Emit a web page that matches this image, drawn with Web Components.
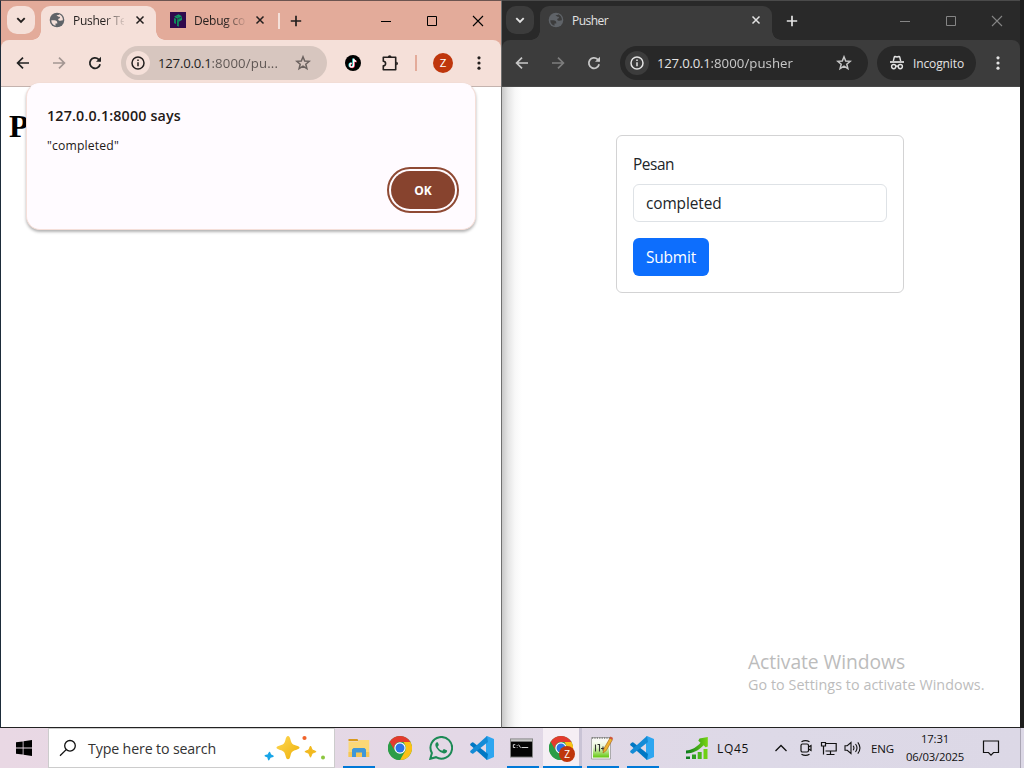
<!DOCTYPE html>
<html lang="en">
<head>
<meta charset="utf-8">
<title>Desktop</title>
<style>
html,body{margin:0;width:1024px;height:768px;overflow:hidden;background:#1d1d1d}
body{font-family:"Open Sans","Noto Sans",sans-serif}
</style>
</head>
<body>
<desk-top></desk-top>
<script>
const ICONS = {
  down:['0 0 16 16','<path d="M4.3 6.200l3.700 3.700 3.700-3.700" fill="none" stroke="currentColor" stroke-width="1.900"/>'],
  x:['0 0 16 16','<path d="M4.500 4.500l7 7M11.500 4.500l-7 7" stroke="currentColor" stroke-width="1.500"/>'],
  plus:['0 0 16 16','<path d="M8 2.800v10.400M2.800 8h10.400" stroke="currentColor" stroke-width="1.700"/>'],
  min:['0 0 12 12','<path d="M1 6.500h10" stroke="currentColor"/>'],
  max:['0 0 12 12','<path d="M1.500 1.500h9v9h-9z" fill="none" stroke="currentColor"/>'],
  close:['0 0 12 12','<path d="M1 1l10 10M11 1L1 11" stroke="currentColor" stroke-width="1.100"/>'],
  back:['0 0 16 16','<path d="M14 8H3M8 2.600L2.600 8 8 13.400" fill="none" stroke="currentColor" stroke-width="1.700"/>'],
  fwd:['0 0 16 16','<path d="M2 8h11M8 2.600L13.400 8 8 13.400" fill="none" stroke="currentColor" stroke-width="1.700"/>'],
  reload:['0 0 16 16','<path d="M13.100 9.200A5.200 5.200 0 1 1 11.600 4.300L13 5.800" fill="none" stroke="currentColor" stroke-width="1.800"/><path d="M14 1.800v5H9z" fill="currentColor"/>'],
  info:['0 0 16 16','<circle cx="8" cy="8" r="6" fill="none" stroke="currentColor" stroke-width="1.500"/><path d="M8 7.200v4M8 4.500v1.600" stroke="currentColor" stroke-width="1.500"/>'],
  star:['0 0 16 16','<path d="M8 1.800l1.700 4.200 4.600.3-3.500 2.900 1.100 4.400L8 11.200l-3.900 2.400 1.100-4.400-3.500-2.900 4.600-.3z" fill="none" stroke="currentColor" stroke-width="1.500"/>'],
  dots:['0 0 16 16','<g fill="currentColor"><circle cx="8" cy="2.800" r="1.600"/><circle cx="8" cy="8" r="1.600"/><circle cx="8" cy="13.200" r="1.600"/></g>'],
  globe:['0 0 16 16','<circle cx="8" cy="8" r="7.300" fill="#5f6368"/><path d="M2.300 8.300h3c2 0 3 1 3 2.600v.6H6.500v2.200C4 13.100 2.200 11 2.300 8.300zM7.300 3c.9 0 .8 1.100 1.800 1.500.9.4 1.900 0 1.900 1 0 1.200-1.800.8-1.800 2 0 1.600 3 1.300 4.700.8.200-2.900-1.400-5.200-3.600-6.100-.3.900-1.600.8-3 .8z" fill="var(--globe,#f5e0d9)"/>'],
  pterm:['0 0 16 16','<path fill="#300a4d" d="M0 0h16v16H0z"/><path d="M4 4.700l4.500-2.400L12 4.300 7.600 6.700zM4 6v5l2 1V7.100zm3 1.700v6.100l1.800.9V9.700L12 8V5zM8 5l3-1.500" fill="#129767"/><path d="M6 4l4 2M7.500 8l4-2M5 6v5M8 8v5" stroke="#087249" stroke-width=".7"/>'],
  tiktok:['0 0 16 16','<circle cx="8" cy="8" r="8" fill="#000"/><g fill="none" stroke-width="1.500"><path d="M8 3.500v6.400a1.900 1.900 0 1 1-1.900-1.900M8 3.500c.2 1.700 1.200 2.500 2.600 2.600" stroke="#25e8e2"/><path d="M9.100 4.100v6.400a1.900 1.900 0 1 1-1.900-1.900M9.100 4.100c.2 1.700 1.200 2.500 2.600 2.600" stroke="#f42c58"/><path d="M8.600 3.700v6.400a1.900 1.900 0 1 1-1.900-1.900M8.600 3.700c.2 1.700 1.200 2.500 2.600 2.600" stroke="#fff" stroke-width="1.400"/></g>'],
  puzzle:['0 0 18 18','<path d="M2.300 3.300h12.400v12.400H2.300v-3.900a2.200 2.200 0 0 0 0-4.600z" fill="none" stroke="currentColor" stroke-width="1.600" stroke-linejoin="round"/><path d="M6.900 3a1.800 1.800 0 0 1 3.600 0zM15.200 7.700a1.800 1.800 0 0 1 0 3.600z" fill="currentColor"/>'],
  incog:['0 0 16 16','<path d="M4.300 6l1-4q.2-.6.800-.5L8 2l1.900-.5q.6-.1.800.5l1 4" fill="none" stroke="currentColor" stroke-width="1.400"/><path d="M1 7h14" stroke="currentColor" stroke-width="1.700"/><g fill="none" stroke="currentColor" stroke-width="1.400"><circle cx="4.700" cy="11.600" r="2.100"/><circle cx="11.300" cy="11.600" r="2.100"/><path d="M6.800 11.300q1.200-.8 2.400 0"/></g>'],
  win:['0 0 16 16','<path d="M0 2.300l6.700-.9v6.200H0zM7.500 1.300L16 0v7.600H7.500zM0 8.400h6.700v6.200L0 13.700zM7.500 8.400H16V16l-8.500-1.300z" fill="#000"/>'],
  search:['0 0 18 18','<circle cx="11" cy="6.800" r="5.300" fill="none" stroke="#111" stroke-width="1.300"/><path d="M7.200 10.600L1 16.800" stroke="#111" stroke-width="1.300"/>'],
  sparkle:['0 0 62 26','<defs><linearGradient id="g" x1="0" y1="0" x2="1" y2="1"><stop stop-color="#ffd957"/><stop offset="1" stop-color="#edb008"/></linearGradient></defs><path d="M24 1c1.300 0 1.800 1 2.600 4 1 3.600 1.800 4.400 5.400 5.400 2.500.7 3.500 1 3.500 2.200s-1 1.600-3.500 2.300c-3.600 1-4.400 1.700-5.400 5.300-.8 3-1.300 4-2.600 4s-1.800-1-2.600-4c-1-3.600-1.800-4.300-5.400-5.300-2.500-.7-3.500-1.100-3.500-2.300s1-1.500 3.500-2.200c3.600-1 4.400-1.800 5.400-5.400.8-3 1.300-4 2.600-4z" fill="url(#g)"/><path d="M46.500 11l1.700 3.900 3.900 1.700-3.900 1.700-1.700 3.900-1.700-3.900-3.900-1.700 3.900-1.700z" fill="#f2b91e" stroke="#f2b91e" stroke-linejoin="round"/><path d="M5.500 17.500l1 2.500 2.500 1.200-2.800.8-1.500 2.600-.8-2.800-2.600-1 2.800-.8z" fill="#17a5e8" stroke="#17a5e8" stroke-width="1.500" stroke-linejoin="round"/><circle cx="40.500" cy="3" r="2.100" fill="#f0632b"/><circle cx="59" cy="22.500" r="2" fill="#8cc63f"/>'],
  folder:['0 0 24 24','<path d="M1.500 3h9l1 2h-10z" fill="#d99a1c"/><path d="M1.500 5.500h9.500L12.500 4h9.700v17H1.500z" fill="#fbd877"/><path d="M1.500 16h20.700v5H1.500z" fill="#f5c657"/><path d="M5 13.500l1.500-1.500h11l1.500 1.500V21h-4v-4.500H9V21H5z" fill="#3f97d8"/>'],
  chrome:['0 0 24 24','<circle cx="12" cy="12" r="12" fill="#2b9d47"/><path d="M1.600 6A12 12 0 0 1 22.400 6H12a6 6 0 0 0-5.200 9z" fill="#e33b2e"/><path d="M22.400 6A12 12 0 0 1 12 24l5.200-9A6 6 0 0 0 17 8.700L15.500 6z" fill="#fbc116"/><path d="M1.600 6l5.200 9A6 6 0 0 0 14 17.600L12 24A12 12 0 0 1 1.600 6z" fill="#2b9d47"/><circle cx="12" cy="12" r="5.700" fill="#fff"/><circle cx="12" cy="12" r="4.500" fill="#2c73e8"/>'],
  whatsapp:['0 0 24 24','<path d="M1.300 22.800l1.600-5.700A10.800 10.800 0 1 1 7 21.200z" fill="none" stroke="#1c8a55" stroke-width="2"/><path d="M8.300 6.200c-.5-.1-1.100.2-1.500.9-.9 1.400-.5 3.300 1.100 5.500 2 2.800 4.600 4.600 7 4.800 1.700.1 3-.9 3.200-2.200.1-.5 0-.7-.4-.9l-2.300-1.100c-.5-.2-.7-.1-1 .3l-.8 1c-.3.300-.6.300-1 .1-1.700-.8-2.900-1.900-3.800-3.400-.2-.4-.1-.6.100-.9l.7-.9c.2-.3.200-.5.100-.8L8.900 6.500q-.2-.3-.6-.3z" fill="#1c8a55"/>'],
  vscode:['0 0 24 24','<path d="M17 0l7 3v18l-7 3-1-1V1z" fill="#2ea6f0"/><path d="M17 24L.5 9.200q-.7-.7 0-1.400L2 6.500q.7-.5 1.400 0L18 18z" fill="#0078c4"/><path d="M17 0L.5 14.800q-.7.700 0 1.400L2 17.500q.7.500 1.400 0L18 6z" fill="#148bd6"/>'],
  cmd:['0 0 24 20','<path d="M0 0h24v20H0z" fill="#888"/><path d="M1 1h22v2H1z" fill="#c9c9c9"/><path d="M1 3.500h22V19H1z" fill="#050505"/><path d="M5.500 6.500H3.500v3h2M7.500 7v.8M7.500 9v.7M9 6.500l2 3.200M12 9.500h7" fill="none" stroke="#ddd"/>'],
  npp:['0 0 24 24','<defs><linearGradient id="n" x1="0" y1="0" x2="0" y2="1"><stop stop-color="#fafcf5"/><stop offset=".4" stop-color="#e4f3cd"/><stop offset="1" stop-color="#62c80e"/></linearGradient></defs><path d="M1.500 1.500h19v21.500h-19z" fill="#f8f8f4" stroke="#999" stroke-width=".8"/><path d="M3 5h16v16.500H3z" fill="url(#n)"/><path d="M2 2h18" stroke="#777" stroke-width="1.600" stroke-dasharray="1.200 1.200"/><path d="M5.500 8.500v7M7.500 8.500h2v7M11 12.500h3.500M13 10.500v4" stroke="#333" fill="none" stroke-width="1.100"/><path d="M13 17l1-4.500L20 2l2.500 1.600L16.300 14.500z" fill="#efb52e" stroke="#a55b16" stroke-width=".6"/><path d="M19.500 2.200L20.500.500l2.600 1.500-1 1.800z" fill="#d05538"/>'],
  chart:['0 0 24 24','<defs><linearGradient id="c" x1="0" x2="1"><stop stop-color="#087a1c"/><stop offset="1" stop-color="#78d513"/></linearGradient></defs><path fill="url(#c)" d="M1 17.500V14.500c6-.5 10.500-3.200 14.500-7.800L13.300 4.800 14.500 2.500 22.800 1v9.500l-2.300.8-1.800-2C13.500 14.500 8 17.500 1 17.500z"/><path d="M1 20.500h4V23H1z" fill="#128023"/><path d="M7 18.500h4V23H7z" fill="#2c9e20"/><path d="M12.700 16h4v7h-4z" fill="#4cb91b"/><path d="M18.500 13h4v10h-4z" fill="#70d014"/>'],
  up:['0 0 14 14','<path d="M1.500 10L7 4.500 12.500 10" fill="none" stroke="#111" stroke-width="1.300"/>'],
  meet:['0 0 14 18','<g fill="none" stroke="#111" stroke-width="1.200"><rect x="2" y="5" width="7.500" height="8" rx="1.500"/><path d="M9.500 8l2.500-1.500v5L9.500 10M2.500 2.800q4-2.500 8 0M2.500 15.200q4 2.500 8 0"/></g>'],
  net:['0 0 18 16','<path d="M5.500 3.500h10.700v7.500H5.500M10.500 11v3M6.500 14.500h8M1.500 2.500h4v3.500h-4zM3.500 6v8.500" fill="none" stroke="#111" stroke-width="1.200"/>'],
  vol:['0 0 18 16','<g fill="none" stroke="#111" stroke-width="1.100"><path d="M1 5.700h2.200L7 2.500v11L3.200 10.300H1z"/><path d="M9.200 5.800q1.500 2.200 0 4.400M11.500 4q3 4 0 8M13.800 2.300q4.300 5.700 0 11.400"/></g>'],
  note:['0 0 18 18','<path d="M1.500 2h15v11.500H11.500L9 16.200 6.500 13.500h-5z" fill="none" stroke="#111" stroke-width="1.200"/>']
};
const define = (name, html, ready) => customElements.define(name, class extends HTMLElement {
  connectedCallback(){
    if(this.shadowRoot) return;
    const t = document.createElement('template');
    t.innerHTML = typeof html === 'function' ? html(this) : html;
    this.attachShadow({mode:'open'}).append(t.content.cloneNode(true));
    if(ready) ready(this);
  }
});

define('ui-icon', el => {
  const [box, art] = ICONS[el.getAttribute('name')];
  const w = el.getAttribute('w') || 16, h = el.getAttribute('h') || w;
  return `<style>:host{display:block;flex:none;width:${w}px;height:${h}px}svg{display:block}</style><svg width="${w}" height="${h}" viewBox="${box}">${art}</svg>`;
});

/* One line of text whose tracking is adjusted to reach the width in its "w" attribute. */
define('fit-text', `<style>:host{display:block;flex:none;white-space:pre}span{display:inline-block}</style><span><slot></slot></span>`, el => {
  const w = +el.getAttribute('w');
  queueMicrotask(() => {
    const s = el.shadowRoot.querySelector('span');
    const now = s.getBoundingClientRect().width;
    if(w && now) s.style.letterSpacing = (w - now) / el.textContent.length + 'px';
  });
});

define('browser-window', `<style>
:host{display:flex;flex-direction:column;position:relative;box-sizing:border-box;height:728px;background:#fff;border-left:1px solid var(--edge);border-top:1px solid var(--top);border-bottom:1px solid #222;color:var(--ink)}
.frame{background:var(--frame);flex:none}
.strip{display:flex;align-items:center;height:39px;padding-left:var(--lead)}
.menu{width:28px;height:28px;border-radius:10px;background:var(--menu);display:grid;place-items:center;margin:-1px 6px 0 0}
.ctl{display:flex;gap:34px;margin-left:auto;margin-right:var(--ctlright);color:var(--ctl)}
.bar{display:flex;align-items:center;height:46px;background:var(--bar);border-radius:8px 8px 0 0}
.line{height:1px;background:var(--line)}
main{flex:1;position:relative;min-height:0}
</style>
<div class="frame"><div class="strip"><div class="menu"><ui-icon name="down"></ui-icon></div><slot name="tabs"></slot>
<div class="ctl"><ui-icon name="min" w="12"></ui-icon><ui-icon name="max" w="12"></ui-icon><ui-icon name="close" w="12"></ui-icon></div></div>
<div class="bar"><slot name="bar"></slot></div></div><div class="line"></div>
<main><slot></slot></main>`);

define('browser-tab', el => `<style>
:host{display:flex;align-items:center;box-sizing:border-box;position:relative;height:34px;margin-top:5px;padding:0 8px 6px 8px;font-size:12px}
:host([active]){background:var(--bar);border-radius:9px 9px 0 0}
:host([active])::before,:host([active])::after{content:"";position:absolute;bottom:0;width:9px;height:9px}
:host([active])::before{left:-9px;background:radial-gradient(circle at 0 0,transparent 8.5px,var(--bar) 9px)}
:host([active])::after{right:-9px;background:radial-gradient(circle at 100% 0,transparent 8.5px,var(--bar) 9px)}
.t{margin-left:8px;overflow:hidden;flex:none;width:var(--tw,150px)}
ui-icon:last-child{margin-left:auto}
:host([fade]) .t{-webkit-mask:linear-gradient(90deg,#000 60%,transparent 105%);mask:linear-gradient(90deg,#000 60%,transparent 105%)}
</style><ui-icon name="${el.getAttribute('icon')}"></ui-icon><div class="t"><slot></slot></div><ui-icon name="x"></ui-icon>`);

define('omni-box', `<style>
:host{display:flex;align-items:center;box-sizing:border-box;height:34px;border-radius:17px;background:var(--omni);padding:0 16px 0 5px;font-size:13.2px;margin-left:18px}
.i{width:24px;height:24px;border-radius:50%;background:var(--chip);display:grid;place-items:center;margin-right:8px}
.s{margin-left:auto;color:var(--star)}
</style><div class="i"><ui-icon name="info"></ui-icon></div><slot></slot><ui-icon class="s" name="star"></ui-icon>`);

define('nav-buttons', `<style>:host{display:flex;gap:20px;padding-left:14px;color:var(--nav)}.f{color:var(--off)}</style>
<ui-icon name="back"></ui-icon><ui-icon class="f" name="fwd"></ui-icon><ui-icon name="reload"></ui-icon>`);

define('alert-dialog', `<style>
:host{display:block;position:absolute;left:26px;top:83px;width:450px;height:147px;box-sizing:border-box;background:#fffbff;border:1px solid #f5dfd9;border-top-color:#fffbff;border-radius:14px;box-shadow:0 2px 3px rgba(0,0,0,.3);padding:22px 20px 0;color:#231917}
.h{font-size:14.300px;line-height:20px;font-weight:600}
.m{font-size:12.200px;line-height:18px;margin-top:11px}
button{display:block;margin:16px 0 0 auto;width:64px;height:38px;border:0;border-radius:19px;background:#87432e;outline:2px solid #8f4a34;outline-offset:2px;color:#fff;font:700 12px "Open Sans",sans-serif;padding:0}
</style><fit-text class="h" w="134">127.0.0.1:8000 says</fit-text><fit-text class="m" w="72">"completed"</fit-text><button>OK</button>`);

define('message-card', `<style>
:host{display:block;box-sizing:border-box;width:288px;height:158px;border:1px solid #d3d3d4;border-radius:6px;padding:17px 16px 16px;background:#fff;color:#212529;font-size:15.400px;line-height:24px}
.in{box-sizing:border-box;height:38px;border:1px solid #dee2e6;border-radius:6px;padding:7px 12px;margin-top:7px}
.b{box-sizing:border-box;width:76px;height:38px;border-radius:6px;background:#0d6efd;color:#fff;padding:8px 13px;margin-top:16px}
</style><fit-text w="41">Pesan</fit-text><div class="in"><fit-text w="75.500">completed</fit-text></div><div class="b"><fit-text w="50">Submit</fit-text></div>`);

define('task-item', el => `<style>
:host{display:flex;flex:none;align-items:center;justify-content:center;width:32px;height:40px;box-sizing:border-box;position:relative}
:host([open]){box-shadow:inset 0 -2px #0078d7}
:host([active]){width:39px;padding-right:3px;background:linear-gradient(90deg,#f5eef4 36px,#c9c3d5 36px)}
b{position:absolute;left:16px;top:18px;width:16px;height:16px;border-radius:50%;background:#bf360c;color:#fff;font:10px/16px "Open Sans",sans-serif;text-align:center}
</style><ui-icon name="${el.getAttribute('icon')}" w="${el.getAttribute('w')||24}" h="${el.getAttribute('h')||24}"></ui-icon>${el.hasAttribute('badge')?`<b>${el.getAttribute('badge')}</b>`:''}`);

define('task-bar', `<style>
:host{display:flex;align-items:center;height:40px;background:linear-gradient(90deg,#e9d8e4,#e3d8e6 45%,#ddd9e7 75%,#dcd8e6);color:#111;font-size:12px}
.start{width:48px;display:grid;place-items:center;flex:none}
.search{box-sizing:border-box;width:287px;height:40px;background:#fff;border:1px solid #ccc;display:flex;align-items:center;padding:0 8px 0 10px;font-size:14.200px;color:#333;flex:none}
.search fit-text{margin-left:11px}.search .sp{margin-left:auto}
.apps{display:flex;margin-left:8px}
.clock{margin-left:12px;margin-right:1px;width:58px;line-height:18px;display:flex;flex-direction:column;align-items:center}
.end{width:3px;height:40px;margin-left:auto;border-left:1px solid #aaa6b4}
</style>
<div class="start"><ui-icon name="win"></ui-icon></div>
<div class="search"><ui-icon name="search" w="18"></ui-icon><fit-text w="128">Type here to search</fit-text><ui-icon class="sp" name="sparkle" w="62" h="26"></ui-icon></div>
<div class="apps">
<task-item open icon="folder"></task-item>
<task-item icon="chrome" style="margin-left:9px"></task-item>
<task-item icon="whatsapp" style="margin-left:9px"></task-item>
<task-item icon="vscode" style="margin-left:9px"></task-item>
<task-item open icon="cmd" w="23" h="20" style="margin-left:9px;padding-right:4px"></task-item>
<task-item open active icon="chrome" badge="Z" style="margin-left:4px"></task-item>
<task-item open icon="npp" style="margin-left:5px;padding-right:2px"></task-item>
<task-item open icon="vscode" style="margin-left:8px;padding-right:2px"></task-item>
</div>
<ui-icon name="chart" w="24" style="margin-left:26px"></ui-icon>
<fit-text w="32" style="margin-left:8px">LQ45</fit-text>
<ui-icon name="up" w="14" style="margin-left:25px"></ui-icon>
<ui-icon name="meet" w="14" h="18" style="margin-left:11px"></ui-icon>
<ui-icon name="net" w="18" h="16" style="margin-left:7px"></ui-icon>
<ui-icon name="vol" w="18" h="16" style="margin-left:6px"></ui-icon>
<fit-text w="23" style="margin-left:9px;font-size:11.500px">ENG</fit-text>
<div class="clock"><fit-text w="28" style="font-size:11.300px">17:31</fit-text><fit-text w="58" style="font-size:11.300px">06/03/2025</fit-text></div>
<ui-icon name="note" w="18" style="margin-left:17px"></ui-icon>
<div class="end"></div>`);

define('desk-top', `<style>
:host{display:flex;flex-direction:column;position:relative;width:1024px;height:768px}
.wins{display:flex;height:728px}
.l{width:501px;--edge:#1d2c3a;--top:#6c5450;--frame:#e3ab9a;--bar:#f5e0d9;--menu:#f5e0d9;--ink:#231f1e;--ctl:#000;--lead:6px;--ctlright:17px;--omni:#d7c6bf;--chip:#f5e0d9;--star:#6b625f;--nav:#222;--off:#a39692;--line:#c4b3ae;--tw:51px}
.r{width:519px;--edge:#707070;--top:#4a4a4a;--frame:#292929;--bar:#3c3c3c;--menu:#3c3c3c;--ink:#e3e3e3;--ctl:#858585;--lead:4px;--ctlright:17px;--omni:#282828;--chip:#3c3c3c;--star:#c7c7c7;--nav:#c7c7c7;--off:#7d7d7d;--line:#484848;--globe:#3c3c3c}
h1{margin:21px 0 0 8px;font:bold 32px/36px "Liberation Serif",serif;color:#000}
.sep{width:2px;height:16px;background:#f5e0d9;margin:0 8px 0 10px}
.div{width:2px;height:16px;background:#e3ab9a;margin-left:16px}
.z{width:20px;height:20px;border-radius:50%;background:#bf360c;color:#fff;font-size:11.500px;line-height:20px;text-align:center;margin-left:16px}
.pill{display:flex;align-items:center;box-sizing:border-box;width:99px;height:34px;border-radius:17px;background:#282828;margin-left:9px;padding-left:12px;font-size:12px}
.pill fit-text{margin-left:8px}
.dim{opacity:.68}
.page{display:flow-root;height:100%;background:linear-gradient(90deg,#c8c8c8,#e5e5e5 6px,#f8f8f8 13px,#fff 20px)}
message-card{margin:48px 0 0 114px}
.wm{position:absolute;left:246px;top:562px;color:#bcbcbc}
</style>
<div class="wins">
<browser-window class="l">
  <browser-tab slot="tabs" active fade icon="globe" style="width:115px"><fit-text w="79">Pusher Testing</fit-text></browser-tab>
  <browser-tab slot="tabs" fade icon="pterm" style="width:112px;padding-left:14px;padding-right:0"><fit-text w="80">Debug console</fit-text></browser-tab>
  <div slot="tabs" class="sep"></div><ui-icon slot="tabs" name="plus"></ui-icon>
  <nav-buttons slot="bar"></nav-buttons>
  <omni-box slot="bar" style="width:206px"><fit-text w="53.500">127.0.0.1</fit-text><fit-text class="dim" w="66.500">:8000/pu...</fit-text></omni-box>
  <ui-icon slot="bar" name="tiktok" style="margin-left:18px"></ui-icon>
  <ui-icon slot="bar" name="puzzle" w="18" style="margin-left:20px"></ui-icon>
  <div slot="bar" class="div"></div><div slot="bar" class="z">Z</div>
  <ui-icon slot="bar" name="dots" style="margin-left:18px"></ui-icon>
  <h1>P</h1>
</browser-window>
<browser-window class="r">
  <browser-tab slot="tabs" active icon="globe" style="width:232px"><fit-text w="36">Pusher</fit-text></browser-tab>
  <ui-icon slot="tabs" name="plus" style="margin-left:12px"></ui-icon>
  <nav-buttons slot="bar" style="padding-left:12px"></nav-buttons>
  <omni-box slot="bar" style="width:248px"><fit-text w="53.500">127.0.0.1</fit-text><fit-text style="opacity:.85" w="82.500">:8000/pusher</fit-text></omni-box>
  <div slot="bar" class="pill"><ui-icon name="incog"></ui-icon><fit-text w="51">Incognito</fit-text></div>
  <ui-icon slot="bar" name="dots" style="margin-left:14px"></ui-icon>
  <div class="page"><message-card></message-card></div>
  <div class="wm"><fit-text w="157" style="font-size:19.300px;line-height:26px">Activate Windows</fit-text><fit-text w="236.500" style="font-size:14.300px;line-height:20px">Go to Settings to activate Windows.</fit-text></div>
</browser-window>
</div>
<task-bar></task-bar>
<alert-dialog></alert-dialog>`);
</script>
</body>
</html>
